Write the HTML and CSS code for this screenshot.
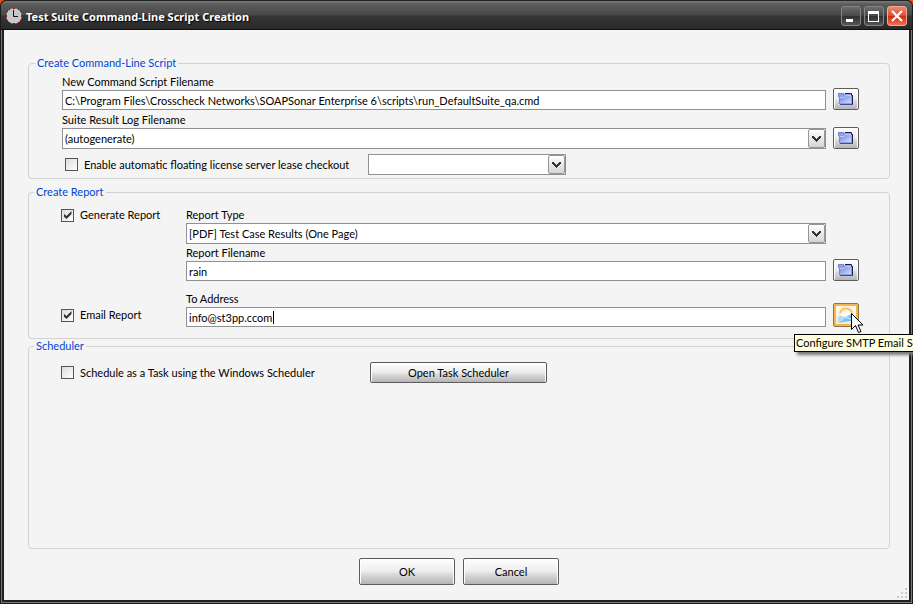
FILE: index.html
```html
<!DOCTYPE html>
<html lang="en">
<head>
<meta charset="utf-8">
<title>Test Suite Command-Line Script Creation</title>
<link rel="stylesheet" href="styles.css">
</head>
<body>
<svg width="0" height="0" class="defs" aria-hidden="true">
  <defs>
    <linearGradient id="folderFill" x1="0" y1="0" x2="1" y2="1">
      <stop offset="0" stop-color="#6f86e0"/><stop offset="1" stop-color="#d3dcfb"/>
    </linearGradient>
    <linearGradient id="mailFill" x1="0" y1="0" x2="1" y2="1">
      <stop offset="0" stop-color="#e4f6ff"/><stop offset="1" stop-color="#3fa4e8"/>
    </linearGradient>
    <symbol id="folder" viewBox="0 0 16 14">
      <path d="M0 1h6v1h8v10H2L1 6z" fill="#8c9ee8"/>
      <path d="M2 6l5-1 1-1h5v7H2z" fill="url(#folderFill)"/>
      <path d="M0 1.500h6M.5 1v4M1.500 5v7" fill="none" stroke="#7686d8"/>
      <path d="M2 5.500h4l2-2h5" fill="none" stroke="#c2cdf8"/>
      <path d="M7 1.500h6.500v2M14.500 3v9" fill="none" stroke="#1c1c50"/>
      <path d="M2 12.500h13" fill="none" stroke="#3c4aa8"/>
    </symbol>
    <symbol id="arrow" viewBox="0 0 9 6">
      <path d="M0 0h2v1h1v1h1v1h1V2h1V1h1V0h2v2H8v1H7v1H6v1H5v1H4V5H3V4H2V3H1V2H0z" fill="#333"/>
    </symbol>
  </defs>
</svg>
<div class="window">
  <header class="titlebar">
    <svg class="clock" viewBox="0 0 16 16" aria-hidden="true">
      <circle cx="8" cy="8" r="7.800" fill="#c8c8c8"/>
      <path d="M7 0h2v1H7zM7 15h2v1H7zM0 7h1v2H0zM15 7h1v2h-1zM3 1h1v1H3zM12 1h1v1h-1zM1 3h1v1H1zM14 3h1v1h-1zM1 12h1v1H1zM14 12h1v1h-1zM3 14h1v1H3zM12 14h1v1h-1z" fill="#8c1010"/>
      <path d="M7.500 2v6.500H12" fill="none" stroke="#111"/>
    </svg>
    <h1>Test Suite Command-Line Script Creation</h1>
    <button class="wbtn" type="button" aria-label="Minimize"><svg viewBox="0 0 18 18"><path d="M4 12h7v3H4z" fill="#fff"/></svg></button>
    <button class="wbtn" type="button" aria-label="Maximize"><svg viewBox="0 0 18 18"><path d="M3 4h11v11H3zM4 7v7h9V7z" fill="#fff" fill-rule="evenodd"/></svg></button>
    <button class="wbtn close" type="button" aria-label="Close"><svg viewBox="0 0 18 18"><path d="M4 4l10 10M14 4L4 14" stroke="#fff" stroke-width="2.200"/></svg></button>
  </header>
  <form class="content">
    <fieldset class="command">
      <legend>Create Command-Line Script</legend>
      <div class="row">
        <div class="field">
          <label for="script">New Command Script Filename</label>
          <input id="script" type="text" value="C:\Program Files\Crosscheck Networks\SOAPSonar Enterprise 6\scripts\run_DefaultSuite_qa.cmd">
        </div>
        <button class="btn icon" type="button" aria-label="Browse script file"><svg><use href="#folder"/></svg></button>
      </div>
      <div class="row">
        <div class="field">
          <label for="log">Suite Result Log Filename</label>
          <div class="combo"><select id="log"><option>(autogenerate)</option></select><span class="drop"><svg><use href="#arrow"/></svg></span></div>
        </div>
        <button class="btn icon" type="button" aria-label="Browse log file"><svg><use href="#folder"/></svg></button>
      </div>
      <div class="lease">
        <label class="check"><input type="checkbox">Enable automatic floating license server lease checkout</label>
        <div class="combo"><select aria-label="License server"><option></option></select><span class="drop"><svg><use href="#arrow"/></svg></span></div>
      </div>
    </fieldset>

    <fieldset class="report">
      <legend>Create Report</legend>
      <label class="check generate"><input type="checkbox" checked>Generate Report</label>
      <div class="field">
        <label for="type">Report Type</label>
        <div class="combo"><select id="type"><option>[PDF] Test Case Results (One Page)</option></select><span class="drop"><svg><use href="#arrow"/></svg></span></div>
      </div>
      <div class="field filename">
        <label for="file">Report Filename</label>
        <input id="file" type="text" value="rain">
      </div>
      <button class="btn icon" type="button" aria-label="Browse report file"><svg><use href="#folder"/></svg></button>
      <label class="check email"><input type="checkbox" checked>Email Report</label>
      <div class="field to">
        <label for="to">To Address</label>
        <input id="to" type="text" value="info@st3pp.ccom">
        <span class="caret"></span>
      </div>
      <div class="smtp">
        <button class="btn icon hot" type="button" aria-label="Configure SMTP email">
          <svg class="mail" viewBox="0 0 18 18">
            <path d="M1 8l4-5 6-2 6 5v6l-6 4H1z" fill="#fff1d2"/>
            <path d="M3 7c1-3 3-4.500 6-4.500s5 1.500 6 4" fill="none" stroke="#ffbe62" stroke-width="2"/>
            <path d="M4 7l9-2v5l-9 2z" fill="#fffdf2"/>
            <path d="M1 9l7 2 8-4v7.500L1 17z" fill="url(#mailFill)"/>
            <path d="M1 16.500l7-6 8 4" fill="none" stroke="#d9f1ff"/>
          </svg>
        </button>
        <svg class="cursor" viewBox="0 0 13 21" aria-hidden="true">
          <path d="M.5.5v16l4-4 3 7 2.500-1-3-6.500h5z" fill="#fff" stroke="#000"/>
        </svg>
        <div class="tip" role="tooltip">Configure SMTP Email Se</div>
      </div>
    </fieldset>

    <fieldset class="scheduler">
      <legend>Scheduler</legend>
      <div class="task">
        <label class="check"><input type="checkbox">Schedule as a Task using the Windows Scheduler</label>
        <button class="btn" type="button">Open Task Scheduler</button>
      </div>
    </fieldset>

    <footer>
      <button class="btn" type="submit">OK</button>
      <button class="btn" type="button">Cancel</button>
    </footer>
    <svg class="grip" viewBox="0 0 10 10" aria-hidden="true"><path d="M8 0h2v2H8zM4 4h2v2H4zM8 4h2v2H8zM0 8h2v2H0zM4 8h2v2H4zM8 8h2v2H8z" fill="#ccc"/></svg>
  </form>
</div>
</body>
</html>
```
FILE: styles.css
```css
* { box-sizing: border-box; }
body {
  margin: 0;
  overflow: hidden;
  background: #e8500e;
  font: 11px/14px Lato, "Liberation Sans", sans-serif;
  color: #000;
}
.defs { position: absolute; }
input, select, button { font: inherit; color: inherit; margin: 0; }
.window {
  display: flex;
  flex-direction: column;
  min-height: 100vh;
  padding: 0 4px 4px;
  background: #232020;
  border-radius: 6px 6px 0 0;
  box-shadow: inset 0 0 0 1px #1c1a1a, inset 0 0 0 2px #777;
}
.titlebar {
  display: flex;
  align-items: center;
  gap: 3px;
  height: 30px;
  margin: 0 -3px;
  padding: 3px 5px 1px;
  border-top: 1px solid #222;
  border-bottom: 1px solid #111;
  border-radius: 6px 6px 0 0;
  background: linear-gradient(#7a7a7a 0, #5c5c5c 3px, #484848 14px, #353535 15px, #292929 100%);
}
.clock { width: 16px; height: 16px; }
h1 {
  flex: 1;
  margin: 0 0 0 1px;
  padding-top: 1px;
  font: bold 11px/16px "Noto Sans", sans-serif;
  color: #fff;
  text-shadow: 1px 1px 1px #000;
}
.wbtn {
  width: 20px;
  height: 20px;
  padding: 0;
  border: 1px solid #858585;
  border-radius: 3px;
  background: linear-gradient(#6c6c6c, #484848 50%, #303030 51%, #555);
}
.wbtn svg { display: block; width: 18px; height: 18px; }
.close { border-color: #f0a898; background: linear-gradient(#ec8a72, #e0492c 50%, #d22a10 51%, #ee7050); }
.content {
  position: relative;
  flex: 1;
  display: flex;
  flex-direction: column;
  padding: 26px 19px 15px 24px;
  background: #f4f4f4;
}
fieldset {
  min-width: 0;
  margin: 0;
  border: 1px solid #d2d2d4;
  border-radius: 4px;
  padding: 5px 30px 3px 33px;
}
legend { margin-left: -27px; padding: 0 2px; color: #0046d5; }
.command { margin-bottom: 6px; }
.row { display: flex; align-items: flex-end; gap: 7px; margin-bottom: 3px; }
.field { flex: 1; min-width: 0; }
.field > label { display: block; padding-bottom: 1px; }
input[type="text"], select {
  display: block;
  width: 100%;
  height: 20px;
  padding: 0 2px;
  border: 1px solid #919191;
  border-radius: 0;
  background: #fff;
  outline: none;
}
select { height: 21px; appearance: none; }
.combo { position: relative; }
.drop {
  position: absolute;
  top: 1px;
  right: 1px;
  bottom: 1px;
  width: 17px;
  display: grid;
  place-items: center;
  border: 1px solid #969696;
  border-radius: 2px;
  background: linear-gradient(#fff, #d4d4d4);
  pointer-events: none;
}
.drop svg { width: 9px; height: 6px; }
.check { display: flex; align-items: center; gap: 6px; }
.check input {
  appearance: none;
  display: grid;
  place-items: center;
  width: 13px;
  height: 13px;
  border: 1px solid #555;
  background: linear-gradient(135deg, #dcdcdc, #fff);
}
.check input:checked::before {
  content: "";
  width: 8px;
  height: 8px;
  background: #333;
  clip-path: polygon(0 30%, 38% 62%, 100% 0, 100% 38%, 38% 100%, 0 66%);
}
.lease { display: flex; align-items: center; margin-top: 5px; padding-left: 3px; }
.lease .check { width: 303px; }
.lease .combo { width: 198px; }
.btn {
  border: 1px solid #5c5c5c;
  border-radius: 2px;
  padding: 0;
  background: linear-gradient(#fff, #ececec 50%, #dcdcdc 60%, #b4b4b4);
  box-shadow: inset 1px 0 #fff, inset -1px 0 #fff;
}
.icon { display: grid; place-items: center; width: 26px; height: 22px; }
.icon svg { width: 16px; height: 14px; }
.report {
  display: grid;
  grid-template-columns: 118px 1fr 26px;
  column-gap: 7px;
  align-items: end;
  padding: 9px 30px 11px 32px;
}
.report .generate { align-self: start; }
.filename { grid-column: 2; margin-top: 2px; }
.to { position: relative; margin-top: 11px; }
.caret { position: absolute; left: 87px; bottom: 3px; width: 1px; height: 13px; background: #000; }
.email { padding-bottom: 5px; }
.smtp { position: relative; }
.hot {
  height: 24px;
  border-color: #8a7448;
  background: linear-gradient(#fffdf5, #f5e9d0);
  box-shadow: inset 0 0 0 2px #f6b44c;
}
.icon .mail { width: 18px; height: 18px; }
.cursor { position: absolute; left: 18px; top: 10px; z-index: 2; width: 13px; height: 21px; }
.tip {
  position: absolute;
  top: 31px;
  left: -39px;
  width: 150px;
  padding: 1px 1px;
  border: 1px solid #000;
  background: #ffffe1;
  box-shadow: 3px 3px 3px #777;
  white-space: nowrap;
}
.scheduler { flex: 1; padding: 9px 30px 3px 32px; }
.task { display: flex; align-items: center; }
.task .check { width: 309px; }
.task .btn { width: 177px; height: 21px; }
footer { display: flex; justify-content: center; gap: 8px; padding-top: 9px; }
footer .btn { width: 96px; height: 27px; }
.grip { position: absolute; right: 2px; bottom: 2px; width: 10px; height: 10px; }
```
